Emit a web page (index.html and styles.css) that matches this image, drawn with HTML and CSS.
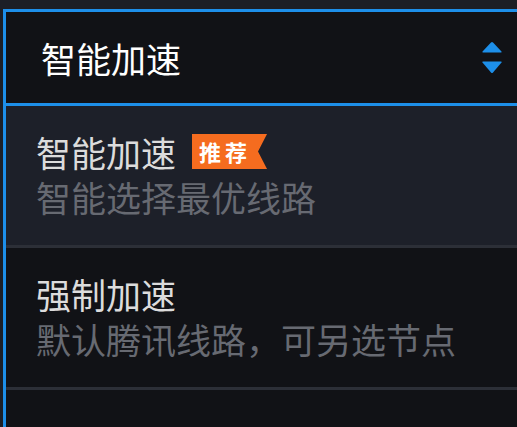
FILE: index.html
```html
<!DOCTYPE html>
<html lang="zh-CN">
<head>
<meta charset="utf-8">
<link rel="stylesheet" href="styles.css">
</head>
<body>
<div class="dropdown">
  <div class="select">
    <span class="select-value">智能加速</span>
    <svg class="arrows" width="22" height="34" viewBox="0 0 22 34">
      <path d="M1.5 10.5 L10 1.5 Q11 0.5 12 1.5 L20.5 10.5 Q21 11.5 20 11.5 L2 11.5 Q1 11.5 1.5 10.5 Z" fill="#1d8fe9"/>
      <path d="M1.5 21.5 Q1 20.5 2 20.5 L20 20.5 Q21 20.5 20.5 21.5 L12 31.5 Q11 32.5 10 31.5 Z" fill="#1d8fe9"/>
    </svg>
  </div>
  <ul class="options">
    <li class="option active">
      <div class="title">智能加速<span class="badge">推荐</span></div>
      <div class="desc">智能选择最优线路</div>
    </li>
    <li class="option">
      <div class="title">强制加速</div>
      <div class="desc">默认腾讯线路，可另选节点</div>
    </li>
    <li class="option last"></li>
  </ul>
</div>
</body>
</html>
```
FILE: styles.css
```css
html, body {
  margin: 0;
  padding: 0;
  background: #1c1f26;
  overflow: hidden;
  width: 517px;
  height: 427px;
}
body {
  font-family: "Noto Sans CJK SC", "Noto Sans", sans-serif;
}
.dropdown {
  margin: 9px 0 0 3px;
}
.select {
  height: 91px;
  border: 3px solid #1d8fe9;
  border-right: none;
  background: #111216;
  display: flex;
  align-items: center;
  justify-content: space-between;
  padding: 0 14px 0 35px;
}
.select-value {
  color: #ffffff;
  font-size: 35px;
  line-height: 45px;
}
.arrows {
  display: block;
  margin-top: 1px;
}
.options {
  list-style: none;
  margin: 0;
  padding: 0;
  border-left: 3px solid #1d8fe9;
}
.option {
  height: 142px;
  box-sizing: border-box;
  padding: 23px 0 0 30px;
  background: #111216;
  border-bottom: 3px solid #2c2f37;
}
.option.active {
  background: #1d2029;
}
.option.last {
  border-bottom: none;
  height: 40px;
}
.title {
  color: #dcdcdc;
  font-size: 35px;
  line-height: 45px;
  display: flex;
  align-items: center;
}
.desc {
  color: #676a72;
  font-size: 35px;
  line-height: 45px;
}
.badge {
  display: inline-block;
  margin-left: 16px;
  width: 75px;
  height: 35px;
  line-height: 35px;
  box-sizing: border-box;
  padding-left: 7px;
  background: #f56c1f;
  color: #ffffff;
  font-size: 22px;
  font-weight: bold;
  letter-spacing: 4px;
  clip-path: polygon(0 0, 100% 0, 88% 50%, 100% 100%, 0 100%);
}
```
